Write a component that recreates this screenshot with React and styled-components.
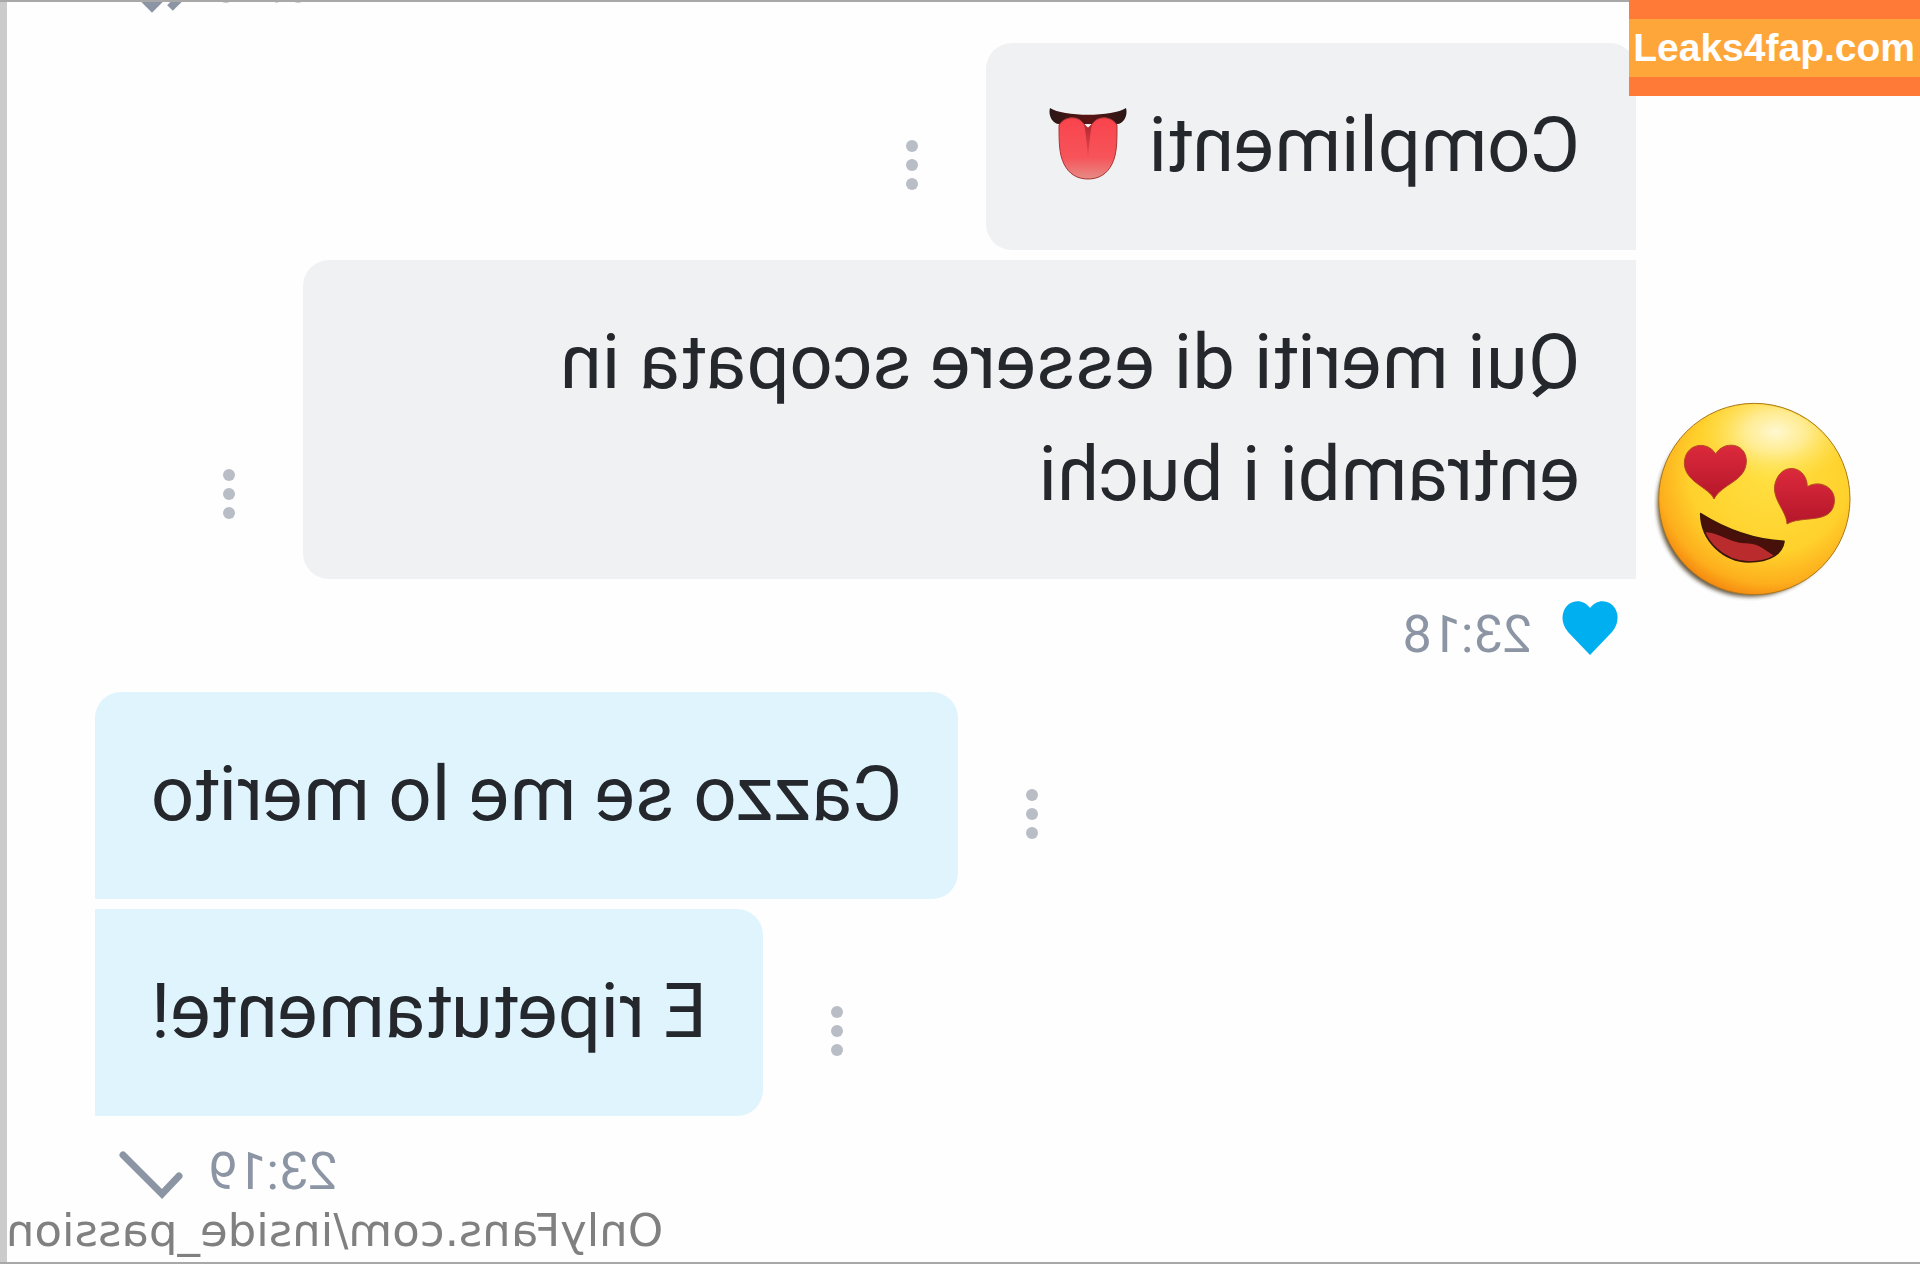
import React from 'react';
import styled, { createGlobalStyle } from 'styled-components';

const incoming = [
	{ text: 'Complimenti', tongue: true },
	{ text: 'Qui meriti di essere scopata in entrambi i buchi' },
];

const outgoing = [{ text: 'Cazzo se me lo merito' }, { text: 'E ripetutamente!' }];

const MoreButton = () => (
	<DotsButton type='button' aria-label='More'>
		<svg width='12' height='50' viewBox='0 0 12 50' fill='#b9bdc6'>
			<circle cx='6' cy='6' r='6' />
			<circle cx='6' cy='25' r='6' />
			<circle cx='6' cy='44' r='6' />
		</svg>
	</DotsButton>
);

const Tongue = () => (
	<TongueIcon width='78' height='74' viewBox='0 0 78 74'>
		<defs>
			<linearGradient id='tongue' x1='0' y1='0' x2='0' y2='1'>
				<stop offset='0' stopColor='#f9434c' />
				<stop offset='0.65' stopColor='#f7545a' />
				<stop offset='1' stopColor='#e58c86' />
			</linearGradient>
			<linearGradient id='lip' x1='0' y1='0' x2='1' y2='0'>
				<stop offset='0' stopColor='#2a1716' />
				<stop offset='0.5' stopColor='#5a1312' />
				<stop offset='1' stopColor='#2a1716' />
			</linearGradient>
			<linearGradient id='fold' x1='0' y1='0' x2='0' y2='1'>
				<stop offset='0' stopColor='#b02830' />
				<stop offset='1' stopColor='#ee4a52' />
			</linearGradient>
		</defs>
		<path d='M1 0C14 9 64 9 77 0C79 7 75 15 69 16L9 16C3 15 -1 7 1 0Z' fill='url(#lip)' />
		<path
			d='M10 17C15 9 25 8 31 12C35 15 37 20 39 20C41 20 43 15 47 12C53 8 63 9 68 17C68 34 68 46 63 56C58 66 50 71 39 71C28 71 20 66 15 56C10 46 10 34 10 17Z'
			fill='url(#tongue)'
			stroke='#a93435'
			strokeWidth='1'
		/>
		<path d='M35 16C37 26 38 38 39 50C40 38 41 26 43 16L39 20Z' fill='url(#fold)' />
	</TongueIcon>
);

const HeartEyes = () => (
	<svg width='204' height='204' viewBox='0 0 612 612'>
		<defs>
			<radialGradient id='face' cx='0.58' cy='0.36' r='0.68'>
				<stop offset='0' stopColor='#ffe042' />
				<stop offset='0.62' stopColor='#ffd12c' />
				<stop offset='0.86' stopColor='#fdae1c' />
				<stop offset='1' stopColor='#f4800c' />
			</radialGradient>
			<radialGradient id='shine'>
				<stop offset='0' stopColor='#fff8d2' />
				<stop offset='0.4' stopColor='#fff3b0' stopOpacity='0.75' />
				<stop offset='1' stopColor='#ffe55a' stopOpacity='0' />
			</radialGradient>
			<linearGradient id='eye' x1='0' y1='0' x2='0' y2='1'>
				<stop offset='0' stopColor='#dc2a3c' />
				<stop offset='1' stopColor='#b5162a' />
			</linearGradient>
			<clipPath id='mouth'>
				<path d='M140 341C210 385 300 419 390 424C385 460 350 486 285 486C210 484 142 425 140 341Z' />
			</clipPath>
			<clipPath id='disc'>
				<circle cx='301' cy='297' r='284' />
			</clipPath>
			<filter id='soft' x='-20%' y='-20%' width='140%' height='140%'>
				<feGaussianBlur stdDeviation='7' />
			</filter>
		</defs>
		<g transform='matrix(-1 0 0 1 612 0)'>
			<circle cx='288' cy='312' r='278' fill='#3a2a10' opacity='0.8' filter='url(#soft)' />
			<circle cx='301' cy='297' r='287' fill='url(#face)' stroke='#a9781c' strokeWidth='3' />
			<ellipse cx='365' cy='95' rx='230' ry='150' fill='url(#shine)' clipPath='url(#disc)' />
			<path
				d='M180 297C165 262 92 246 91 190C91 132 158 118 185 162C207 122 276 126 277 183C277 244 203 251 180 297Z'
				fill='url(#eye)'
				stroke='#b34a20'
				strokeWidth='3'
			/>
			<path
				d='M399 372C398 329 343 291 368 237C391 186 458 199 460 260C499 237 550 264 540 313C527 374 443 345 399 372Z'
				fill='url(#eye)'
				stroke='#b34a20'
				strokeWidth='3'
			/>
			<g clipPath='url(#mouth)'>
				<rect x='130' y='330' width='270' height='170' fill='#47100b' />
				<path d='M140 400C180 385 225 432 275 430C320 430 342 460 365 470L300 510L190 490Z' fill='#ba2b2d' />
			</g>
			<path
				d='M140 341C210 385 300 419 390 424C385 460 350 486 285 486C210 484 142 425 140 341Z'
				fill='none'
				stroke='#3b1708'
				strokeWidth='5'
				strokeLinejoin='round'
			/>
		</g>
	</svg>
);

const Heart = () => (
	<svg width='56' height='68' viewBox='0 0 56 68' fill='#00aff0'>
		<path d='M28 54L6 31C-2 22 -1 9 7 3C14 -2 23 0 28 7C33 0 42 -2 49 3C57 9 58 22 50 31Z' />
	</svg>
);

const Check = () => (
	<svg width='64' height='56' viewBox='0 0 64 56' fill='none' stroke='#8c95a4' strokeWidth='7'>
		<path d='M4 32L21 50L60 11' strokeLinecap='round' />
	</svg>
);

const DoubleCheck = () => (
	<svg width='68' height='56' viewBox='0 0 68 56' fill='none' stroke='#8c95a4' strokeWidth='8'>
		<path d='M17 51L4 38M16 31L35 50L64 21' />
	</svg>
);

const App = () => {
	return (
		<>
			<GlobalStyle />
			<Screen>
				<Chat>
					<Previous>
						<Meta>
							<time>23:16</time>
							<DoubleCheck />
						</Meta>
					</Previous>
					<Incoming>
						<Avatar>
							<HeartEyes />
						</Avatar>
						<Thread>
							{incoming.map((message) => (
								<Row key={message.text}>
									<Bubble>
										{message.text}
										{message.tongue && <Tongue />}
									</Bubble>
									<MoreButton />
								</Row>
							))}
							<Meta $incoming>
								<Heart />
								<time>23:18</time>
							</Meta>
						</Thread>
					</Incoming>
					<Outgoing>
						{outgoing.map((message) => (
							<Row key={message.text} $mine>
								<Bubble $mine>{message.text}</Bubble>
								<MoreButton />
							</Row>
						))}
						<Meta>
							<time>23:19</time>
							<Check />
						</Meta>
					</Outgoing>
					<Watermark>OnlyFans.com/inside_passion</Watermark>
				</Chat>
				<Badge>
					<BadgeText>Leaks4fap.com</BadgeText>
				</Badge>
			</Screen>
		</>
	);
};

export default App;

const GlobalStyle = createGlobalStyle`
	* {
		box-sizing: border-box;
	}

	body {
		margin: 0;
		background: #fefefe;
		font-family: Roboto, 'Liberation Sans', sans-serif;
	}
`;

const Screen = styled.div`
	position: relative;
`;

/* the whole conversation is flipped, only the badge reads normally */
const Chat = styled.main`
	display: flex;
	flex-direction: column;
	min-height: 100vh;
	border: solid #a8a8a8;
	border-width: 2px 0;
	box-shadow: inset -7px 0 0 #cbcbcb;
	transform: scaleX(-1);
`;

const Meta = styled.div`
	display: flex;
	align-items: center;
	justify-content: ${(props) => (props.$incoming ? 'flex-start' : 'flex-end')};
	gap: ${(props) => (props.$incoming ? '30px' : '25px')};
	margin-top: 11px;
	padding: ${(props) => (props.$incoming ? '0 18px' : '0 24px')};
	color: #8c95a4;
	font-size: 52px;
	line-height: 70px;

	svg {
		flex: none;
	}
`;

const Previous = styled.div`
	display: flex;
	flex-direction: column;
	justify-content: flex-end;
	height: 41px;
	padding: 0 95px 23px 0;
	overflow: hidden;
`;

const Incoming = styled.section`
	display: grid;
	grid-template-columns: 284px 1fr;
	margin-bottom: 22px;
`;

const Avatar = styled.div`
	display: flex;
	align-items: flex-end;
	justify-content: flex-end;
	padding: 0 18px 66px 0;
`;

const Thread = styled.div`
	display: flex;
	flex-direction: column;
	gap: 10px;
`;

const Outgoing = styled(Thread)`
	padding-right: 95px;
`;

const Row = styled.div`
	display: flex;
	flex-direction: ${(props) => (props.$mine ? 'row-reverse' : 'row')};
	align-items: flex-end;
	gap: 68px;
`;

const Bubble = styled.div`
	display: flex;
	align-items: center;
	max-width: 1333px;
	padding: 46px 56px 49px;
	border-radius: ${(props) => (props.$mine ? '26px 0 0 26px' : '0 26px 26px 0')};
	background: ${(props) => (props.$mine ? '#e0f4fe' : '#f0f1f3')};
	color: #24272b;
	font-size: 76px;
	line-height: 112px;

	${Row}:first-child > & {
		border-top-left-radius: 26px;
		border-top-right-radius: 26px;
	}
`;

const TongueIcon = styled.svg`
	flex: none;
	margin: 0 7px 0 22px;
`;

const DotsButton = styled.button`
	display: flex;
	margin: 0 0 60px;
	padding: 0;
	border: 0;
	background: none;
	cursor: pointer;
`;

const Watermark = styled.div`
	padding-right: 6px;
	color: #808080;
	font-family: 'DejaVu Sans', sans-serif;
	font-size: 45px;
	line-height: 48px;
	text-align: right;
`;

const Badge = styled.aside`
	position: absolute;
	top: 0;
	right: 0;
	padding: 19px 0;
	background: #ff7a37;
`;

const BadgeText = styled.div`
	padding: 0 5px 0 4px;
	background: #ffa63a;
	color: #fff;
	font-family: 'Liberation Sans', sans-serif;
	font-size: 39px;
	font-weight: bold;
	line-height: 58px;
`;
